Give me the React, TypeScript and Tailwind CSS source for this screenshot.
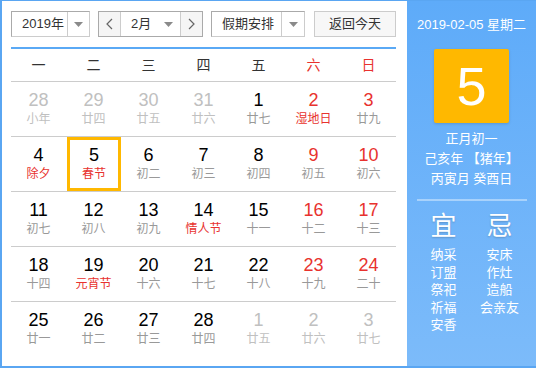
import React from "react";

type Day = { d: number; l: string; other?: boolean; red?: boolean; lred?: boolean; sel?: boolean };

const rows: Day[][] = [
  [
    { d: 28, l: "小年", other: true },
    { d: 29, l: "廿四", other: true },
    { d: 30, l: "廿五", other: true },
    { d: 31, l: "廿六", other: true },
    { d: 1, l: "廿七" },
    { d: 2, l: "湿地日", red: true, lred: true },
    { d: 3, l: "廿九", red: true },
  ],
  [
    { d: 4, l: "除夕", lred: true },
    { d: 5, l: "春节", lred: true, sel: true },
    { d: 6, l: "初二" },
    { d: 7, l: "初三" },
    { d: 8, l: "初四" },
    { d: 9, l: "初五", red: true },
    { d: 10, l: "初六", red: true },
  ],
  [
    { d: 11, l: "初七" },
    { d: 12, l: "初八" },
    { d: 13, l: "初九" },
    { d: 14, l: "情人节", lred: true },
    { d: 15, l: "十一" },
    { d: 16, l: "十二", red: true },
    { d: 17, l: "十三", red: true },
  ],
  [
    { d: 18, l: "十四" },
    { d: 19, l: "元宵节", lred: true },
    { d: 20, l: "十六" },
    { d: 21, l: "十七" },
    { d: 22, l: "十八" },
    { d: 23, l: "十九", red: true },
    { d: 24, l: "二十", red: true },
  ],
  [
    { d: 25, l: "廿一" },
    { d: 26, l: "廿二" },
    { d: 27, l: "廿三" },
    { d: 28, l: "廿四" },
    { d: 1, l: "廿五", other: true },
    { d: 2, l: "廿六", other: true },
    { d: 3, l: "廿七", other: true },
  ],
];

const weekdays = ["一", "二", "三", "四", "五", "六", "日"];

function Caret() {
  return (
    <svg width="9" height="5" viewBox="0 0 9 5">
      <polygon points="0,0 9,0 4.5,5" fill="#8a8a8a" />
    </svg>
  );
}

function Chevron({ dir }: { dir: "l" | "r" }) {
  return (
    <svg width="7" height="12" viewBox="0 0 7 12">
      <polyline
        points={dir === "l" ? "6,1 1,6 6,11" : "1,1 6,6 1,11"}
        fill="none"
        stroke="#666"
        strokeWidth="1.2"
      />
    </svg>
  );
}

export default function App() {
  return (
    <div
      className="w-[536px] h-[368px] flex border-l-2 border-t border-b-2 border-[#5aa6f2] bg-white text-[#333]"
      style={{ fontFamily: '"Liberation Sans", "Noto Sans CJK SC", sans-serif' }}
    >
      {/* Left: calendar */}
      <div className="w-[405px] pl-[9px] pt-[10px] flex flex-col">
        {/* Toolbar */}
        <div className="flex items-center h-[26px] text-[13px]">
          <div className="w-[79px] h-[26px] flex border border-[#aaa] border-r-[#ccc] border-b-[#ccc]">
            <div className="w-[55px] flex items-center pl-[10px]">2019年</div>
            <div className="flex-1 flex items-center justify-center border-l border-[#ccc]">
              <Caret />
            </div>
          </div>
          <div className="ml-[8px] w-[105px] h-[26px] flex border border-[#aaa]">
            <div className="w-[22px] flex items-center justify-center bg-[#f5f5f5] border-r border-[#ccc]">
              <Chevron dir="l" />
            </div>
            <div className="w-[59px] flex items-center pl-[10px] justify-between pr-[7px]">
              <span>2月</span>
              <Caret />
            </div>
            <div className="flex-1 flex items-center justify-center bg-[#f5f5f5] border-l border-[#ccc]">
              <Chevron dir="r" />
            </div>
          </div>
          <div className="ml-[8px] w-[94px] h-[26px] flex border border-[#aaa] border-r-[#ccc] border-b-[#ccc]">
            <div className="w-[69px] flex items-center pl-[10px]">假期安排</div>
            <div className="flex-1 flex items-center justify-center border-l border-[#ccc]">
              <Caret />
            </div>
          </div>
          <div className="ml-[9px] w-[82px] h-[26px] flex items-center justify-center border border-[#ccc] bg-[#f7f7f7]">
            返回今天
          </div>
        </div>
        <div className="mt-[10px] w-[385px] h-[2px] bg-[#5aa9f5]" />

        {/* Weekdays */}
        <div className="w-[385px] grid grid-cols-7 h-[32px] items-center text-[14px]">
          {weekdays.map((w, i) => (
            <div key={w} className={`text-center ${i >= 5 ? "text-[#e8322e]" : "text-[#333]"}`}>
              {w}
            </div>
          ))}
        </div>

        {/* Days */}
        <div className="w-[385px] flex flex-col">
          {rows.map((row, ri) => (
            <div key={ri} className="grid grid-cols-7 h-[55px] border-t border-[#ccc]">
              {row.map((c, ci) => {
                const num = c.other ? "text-[#c0c0c0]" : c.red ? "text-[#e8322e]" : "text-black";
                const lun = c.other ? "text-[#c0c0c0]" : c.lred ? "text-[#e8322e]" : "text-[#999]";
                return (
                  <div key={ci} className="flex items-center justify-center">
                    <div
                      className={`flex flex-col items-center justify-center ${
                        c.sel ? "w-[54px] h-[54px] -mr-[1px] border-[3px] border-[#ffb800]" : "w-full h-full"
                      }`}
                    >
                      <div className={`text-[18px] leading-[20px] ${num}`}>{c.d}</div>
                      <div className={`text-[12px] leading-[18px] ${lun}`}>{c.l}</div>
                    </div>
                  </div>
                );
              })}
            </div>
          ))}
        </div>
      </div>

      {/* Right: detail panel */}
      <div className="flex-1 bg-gradient-to-b from-[#5eabf9] to-[#7cbbfa] text-white flex flex-col items-center">
        <div className="mt-[14px] text-[13px] leading-[20px]">2019-02-05 星期二</div>
        <div className="mt-[14px] w-[75px] h-[74px] rounded-[2px] bg-[#ffb800] shadow-[0_1px_3px_rgba(0,0,0,0.15)] flex items-center justify-center text-[54px] leading-none">
          5
        </div>
        <div className="mt-[6px] text-[13px] leading-[20px] flex flex-col items-center">
          <div>正月初一</div>
          <div>己亥年 【猪年】</div>
          <div>丙寅月 癸酉日</div>
        </div>
        <div className="mt-[10px] w-[110px] h-[2px] bg-white/40" />
        <div className="w-[112px] grid grid-cols-2 mt-[9px]">
          <div className="text-center text-[26px] leading-[32px] [text-shadow:0_1px_2px_rgba(0,0,0,0.2)]">宜</div>
          <div className="text-center text-[26px] leading-[32px] [text-shadow:0_1px_2px_rgba(0,0,0,0.2)]">忌</div>
          <div className="flex flex-col items-center text-[13px] leading-[17.5px] mt-[4px]">
            <div>纳采</div>
            <div>订盟</div>
            <div>祭祀</div>
            <div>祈福</div>
            <div>安香</div>
          </div>
          <div className="flex flex-col items-center text-[13px] leading-[17.5px] mt-[4px]">
            <div>安床</div>
            <div>作灶</div>
            <div>造船</div>
            <div>会亲友</div>
          </div>
        </div>
      </div>
    </div>
  );
}
